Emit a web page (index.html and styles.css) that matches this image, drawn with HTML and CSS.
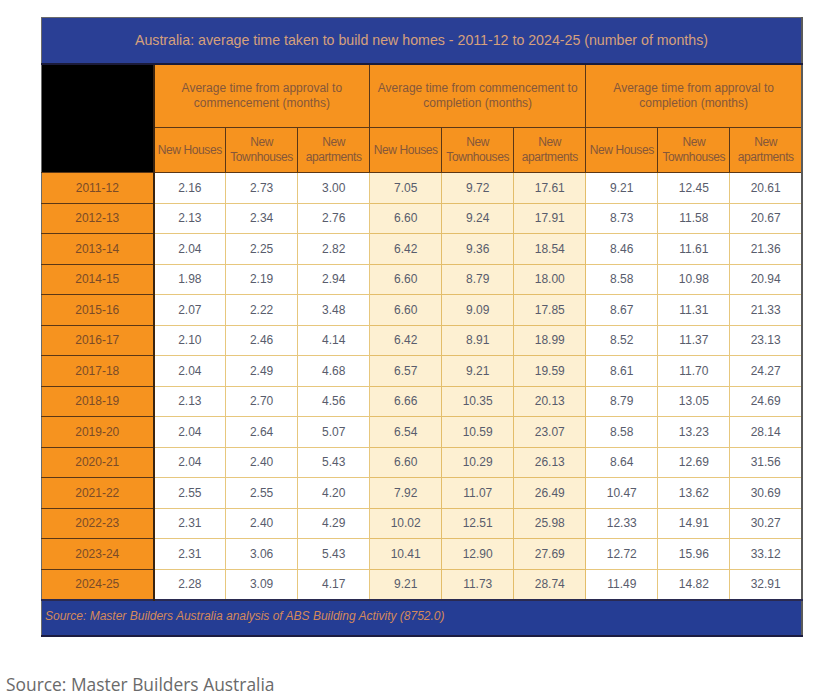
FILE: index.html
```html
<!DOCTYPE html>
<html>
<head>
<meta charset="utf-8">
<link rel="stylesheet" href="styles.css">
</head>
<body>
<div class="page">
  <table class="tbl">
    <colgroup>
      <col class="c-year">
      <col class="c-val"><col class="c-val"><col class="c-val">
      <col class="c-val"><col class="c-val"><col class="c-val">
      <col class="c-val"><col class="c-val"><col class="c-val">
    </colgroup>
    <thead>
      <tr class="r-title"><th colspan="10" class="title">Australia: average time taken to build new homes - 2011-12 to 2024-25 (number of months)</th></tr>
      <tr class="r-group">
        <th rowspan="2" class="blank"></th>
        <th colspan="3" class="grp">Average time from approval to<br>commencement (months)</th>
        <th colspan="3" class="grp">Average time from commencement to<br>completion (months)</th>
        <th colspan="3" class="grp">Average time from approval to<br>completion (months)</th>
      </tr>
      <tr class="r-sub">
        <th class="sub">New Houses</th><th class="sub">New<br>Townhouses</th><th class="sub">New<br>apartments</th>
        <th class="sub">New Houses</th><th class="sub">New<br>Townhouses</th><th class="sub">New<br>apartments</th>
        <th class="sub">New Houses</th><th class="sub">New<br>Townhouses</th><th class="sub">New<br>apartments</th>
      </tr>
    </thead>
    <tbody>
      <tr><th class="yr">2011-12</th><td>2.16</td><td>2.73</td><td>3.00</td><td class="mid">7.05</td><td class="mid">9.72</td><td class="mid">17.61</td><td>9.21</td><td>12.45</td><td>20.61</td></tr>
      <tr><th class="yr">2012-13</th><td>2.13</td><td>2.34</td><td>2.76</td><td class="mid">6.60</td><td class="mid">9.24</td><td class="mid">17.91</td><td>8.73</td><td>11.58</td><td>20.67</td></tr>
      <tr><th class="yr">2013-14</th><td>2.04</td><td>2.25</td><td>2.82</td><td class="mid">6.42</td><td class="mid">9.36</td><td class="mid">18.54</td><td>8.46</td><td>11.61</td><td>21.36</td></tr>
      <tr><th class="yr">2014-15</th><td>1.98</td><td>2.19</td><td>2.94</td><td class="mid">6.60</td><td class="mid">8.79</td><td class="mid">18.00</td><td>8.58</td><td>10.98</td><td>20.94</td></tr>
      <tr><th class="yr">2015-16</th><td>2.07</td><td>2.22</td><td>3.48</td><td class="mid">6.60</td><td class="mid">9.09</td><td class="mid">17.85</td><td>8.67</td><td>11.31</td><td>21.33</td></tr>
      <tr><th class="yr">2016-17</th><td>2.10</td><td>2.46</td><td>4.14</td><td class="mid">6.42</td><td class="mid">8.91</td><td class="mid">18.99</td><td>8.52</td><td>11.37</td><td>23.13</td></tr>
      <tr><th class="yr">2017-18</th><td>2.04</td><td>2.49</td><td>4.68</td><td class="mid">6.57</td><td class="mid">9.21</td><td class="mid">19.59</td><td>8.61</td><td>11.70</td><td>24.27</td></tr>
      <tr><th class="yr">2018-19</th><td>2.13</td><td>2.70</td><td>4.56</td><td class="mid">6.66</td><td class="mid">10.35</td><td class="mid">20.13</td><td>8.79</td><td>13.05</td><td>24.69</td></tr>
      <tr><th class="yr">2019-20</th><td>2.04</td><td>2.64</td><td>5.07</td><td class="mid">6.54</td><td class="mid">10.59</td><td class="mid">23.07</td><td>8.58</td><td>13.23</td><td>28.14</td></tr>
      <tr><th class="yr">2020-21</th><td>2.04</td><td>2.40</td><td>5.43</td><td class="mid">6.60</td><td class="mid">10.29</td><td class="mid">26.13</td><td>8.64</td><td>12.69</td><td>31.56</td></tr>
      <tr><th class="yr">2021-22</th><td>2.55</td><td>2.55</td><td>4.20</td><td class="mid">7.92</td><td class="mid">11.07</td><td class="mid">26.49</td><td>10.47</td><td>13.62</td><td>30.69</td></tr>
      <tr><th class="yr">2022-23</th><td>2.31</td><td>2.40</td><td>4.29</td><td class="mid">10.02</td><td class="mid">12.51</td><td class="mid">25.98</td><td>12.33</td><td>14.91</td><td>30.27</td></tr>
      <tr><th class="yr">2023-24</th><td>2.31</td><td>3.06</td><td>5.43</td><td class="mid">10.41</td><td class="mid">12.90</td><td class="mid">27.69</td><td>12.72</td><td>15.96</td><td>33.12</td></tr>
      <tr><th class="yr">2024-25</th><td>2.28</td><td>3.09</td><td>4.17</td><td class="mid">9.21</td><td class="mid">11.73</td><td class="mid">28.74</td><td>11.49</td><td>14.82</td><td>32.91</td></tr>
    </tbody>
    <tfoot>
      <tr class="r-foot"><td colspan="10" class="foot">Source: Master Builders Australia analysis of ABS Building Activity (8752.0)</td></tr>
    </tfoot>
  </table>
  <p class="caption">Source: Master Builders Australia</p>
</div>
</body>
</html>
```

FILE: styles.css
```css
html, body {
  margin: 0;
  padding: 0;
  background: #ffffff;
}

.page {
  padding: 17px 0 0 41px;
}

.tbl {
  border-collapse: collapse;
  table-layout: fixed;
  width: 762px;
  font-family: "Liberation Sans", Arial, sans-serif;
  border: 1px solid #6b6b6b;
  border-right: 2px solid #5a5a5a;
}

.c-year { width: 112px; }
.c-val { width: 72px; }

.r-title { height: 46px; }
.title {
  background: #2a3f95;
  color: #d6a07c;
  font-weight: normal;
  font-size: 14.2px;
  text-align: center;
  padding: 0;
  border-bottom: 2px solid #1b1b3a;
}

.r-group { height: 64px; }
.r-sub { height: 45px; }

.blank {
  background: #000000;
  border-right: 2px solid #3a2410;
}

.grp, .sub {
  background: #f6931f;
  color: #85573a;
  font-weight: normal;
  font-size: 12px;
  line-height: 15px;
  text-align: center;
  padding: 0;
  border: 1.5px solid #5b3716;
}

.sub {
  font-size: 12px;
  line-height: 15px;
  letter-spacing: -0.4px;
  white-space: nowrap;
}

tbody tr { height: 30.5px; }

.yr {
  background: #f6931f;
  color: #7a4b28;
  font-weight: normal;
  font-size: 12px;
  text-align: center;
  padding: 0;
  border-top: 1.5px solid #5b3716;
  border-bottom: 1.5px solid #5b3716;
  border-right: 2px solid #3a2410;
}

tbody td {
  background: #ffffff;
  color: #585c6c;
  font-size: 12px;
  text-align: center;
  padding: 0;
  border: 1px solid #e7c77d;
}

tbody td.mid {
  background: #fdf0d2;
  border-color: #e3bd6a;
}

.r-foot { height: 36px; }
.foot {
  background: #253d94;
  color: #d4895a;
  font-style: italic;
  font-size: 12px;
  text-align: left;
  padding: 0 0 4px 3px;
  border-top: 2px solid #2a2a50;
  border-bottom: 2px solid #1c1c40;
}

.caption {
  margin: 35px 0 0 -35px;
  font-family: "Open Sans", "Noto Sans", sans-serif;
  font-size: 17.4px;
  color: #6a6a6a;
}
```
